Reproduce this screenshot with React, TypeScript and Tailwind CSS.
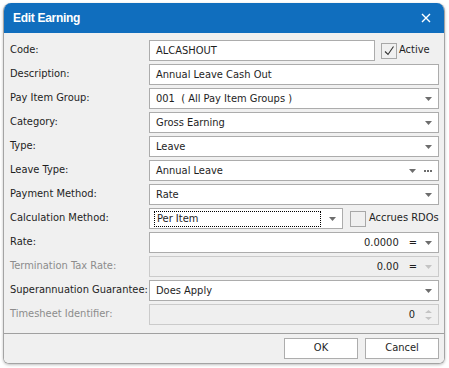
import React from "react";

const Arrow: React.FC<{ disabled?: boolean }> = ({ disabled }) => (
  <svg width="7" height="4" viewBox="0 0 7 4" className="shrink-0">
    <path d="M0 0 H7 L3.5 4 Z" fill={disabled ? "#c4c4c4" : "#6d6d6d"} />
  </svg>
);

const Check: React.FC<{ checked?: boolean }> = ({ checked }) => (
  <div className="w-[16px] h-[16px] shrink-0 border border-[#a8a8a8] bg-[#f0f0f0] flex items-center justify-center">
    {checked && (
      <svg width="12" height="12" viewBox="0 0 12 12">
        <path d="M2 6.5 L5 9.5 L10.5 1.5" stroke="#333" strokeWidth="1.1" fill="none" />
      </svg>
    )}
  </div>
);

interface FieldProps {
  value?: string;
  align?: "left" | "right";
  disabled?: boolean;
  children?: React.ReactNode;
  focus?: boolean;
}

const Field: React.FC<FieldProps> = ({ value, align = "left", disabled, children, focus }) => (
  <div
    className={`flex-1 h-[21px] border flex items-center pl-[4px] pr-[6px] gap-[8px] ${
      disabled ? "bg-[#efefef] border-[#cbcbcb]" : "bg-white border-[#acacac]"
    }`}
  >
    <div
      className={`flex-1 h-[16px] flex items-center px-[2px] ${
        align === "right" ? "justify-end" : ""
      } ${focus ? "border border-dotted border-black" : ""}`}
    >
      <span className="text-[11px] text-[#1e1e1e] leading-none whitespace-pre">{value}</span>
    </div>
    {children}
  </div>
);

const Row: React.FC<{ label: string; disabled?: boolean; children: React.ReactNode }> = ({
  label,
  disabled,
  children,
}) => (
  <div className="flex items-center h-[21px]">
    <div
      className={`w-[139px] text-[11px] whitespace-nowrap ${
        disabled ? "text-[#8c8c8c]" : "text-[#1e1e1e]"
      }`}
    >
      {label}
    </div>
    <div className="flex-1 flex items-center">{children}</div>
  </div>
);

export default function App() {
  return (
    <div
      className="w-[449px] h-[368px] bg-white p-[3px] pr-[4px] pb-[4px]"
      style={{ fontFamily: '"DejaVu Sans Condensed", "DejaVu Sans", sans-serif' }}
    >
      <div className="w-full h-full flex flex-col rounded-t-[8px] rounded-b-[6px] overflow-hidden border border-[#a4a4a4] border-t-0 shadow-[0_1px_3px_rgba(0,0,0,0.25)]">
        <div className="h-[30px] bg-[#106ebe] flex items-center justify-between pl-[9px] pr-[13px] shrink-0">
          <span className="text-white font-bold text-[12px] tracking-[-0.3px] font-['Liberation_Sans',Arial,sans-serif]">
            Edit Earning
          </span>
          <svg width="10" height="10" viewBox="0 0 10 10">
            <path d="M1 1 L9 9 M9 1 L1 9" stroke="white" strokeWidth="1.4" />
          </svg>
        </div>
        <div className="flex-1 bg-[#f0f0f0] flex flex-col gap-[3px] pt-[7px] pl-[6px] pr-[5px]">
          <Row label="Code:">
            <Field value="ALCASHOUT" />
            <div className="w-[64px] flex items-center pl-[6px] gap-[2px]">
              <Check checked />
              <span className="text-[11px] text-[#1e1e1e]">Active</span>
            </div>
          </Row>
          <Row label="Description:">
            <Field value="Annual Leave Cash Out" />
          </Row>
          <Row label="Pay Item Group:">
            <Field value="001  ( All Pay Item Groups )">
              <Arrow />
            </Field>
          </Row>
          <Row label="Category:">
            <Field value="Gross Earning">
              <Arrow />
            </Field>
          </Row>
          <Row label="Type:">
            <Field value="Leave">
              <Arrow />
            </Field>
          </Row>
          <Row label="Leave Type:">
            <Field value="Annual Leave">
              <Arrow />
              <svg width="8" height="2" viewBox="0 0 8 2" className="shrink-0">
                <rect x="0" y="0" width="2" height="2" fill="#6d6d6d" />
                <rect x="3" y="0" width="2" height="2" fill="#6d6d6d" />
                <rect x="6" y="0" width="2" height="2" fill="#6d6d6d" />
              </svg>
            </Field>
          </Row>
          <Row label="Payment Method:">
            <Field value="Rate">
              <Arrow />
            </Field>
          </Row>
          <Row label="Calculation Method:">
            <Field value="Per Item" focus>
              <Arrow />
            </Field>
            <div className="w-[96px] flex items-center pl-[7px] gap-[3px]">
              <Check />
              <span className="text-[11px] text-[#1e1e1e] whitespace-nowrap">Accrues RDOs</span>
            </div>
          </Row>
          <Row label="Rate:">
            <Field value="0.0000" align="right">
              <span className="text-[11px] text-[#1e1e1e] leading-none">=</span>
              <Arrow />
            </Field>
          </Row>
          <Row label="Termination Tax Rate:" disabled>
            <Field value="0.00" align="right" disabled>
              <span className="text-[11px] text-[#1e1e1e] leading-none">=</span>
              <Arrow disabled />
            </Field>
          </Row>
          <Row label="Superannuation Guarantee:">
            <Field value="Does Apply">
              <Arrow />
            </Field>
          </Row>
          <Row label="Timesheet Identifier:" disabled>
            <Field value="0" align="right" disabled>
              <svg width="7" height="12" viewBox="0 0 7 12" className="shrink-0">
                <path d="M0 4 H7 L3.5 1 Z M0 8 H7 L3.5 11 Z" fill="#c4c4c4" />
              </svg>
            </Field>
          </Row>
        </div>
        <div className="h-[30px] shrink-0 bg-[#f0f0f0] border-t border-[#a0a0a0] flex items-center justify-end gap-[7px] pr-[5px]">
          <button className="w-[74px] h-[21px] bg-white border border-[#adadad] text-[11px] text-[#1e1e1e]">
            OK
          </button>
          <button className="w-[74px] h-[21px] bg-white border border-[#adadad] text-[11px] text-[#1e1e1e]">
            Cancel
          </button>
        </div>
      </div>
    </div>
  );
}
